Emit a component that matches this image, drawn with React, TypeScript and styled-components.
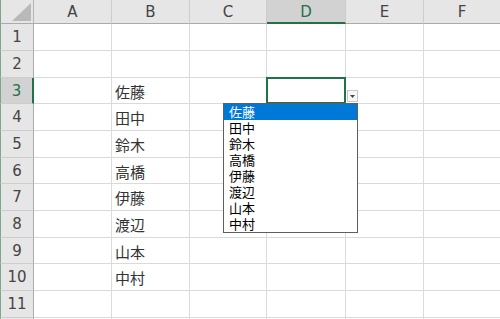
import styled, { createGlobalStyle, css } from "styled-components";

const GlobalStyle = createGlobalStyle`
  html, body {
    margin: 0;
    padding: 0;
    background: #ffffff;
    overflow: hidden;
  }
`;

const COLS = ["A", "B", "C", "D", "E", "F"];
const COL_WIDTHS = [78, 78, 77, 79, 78, 77];
// 11 visible rows; the 12th only peeks out under the window edge
const ROW_HEIGHTS = [27, 27, 26, 27, 27, 26, 27, 27, 26, 27, 27, 27];
const NAMES = ["佐藤", "田中", "鈴木", "高橋", "伊藤", "渡辺", "山本", "中村"];

// the list lives in B3:B10, the validated cell is D3
const cellValue = (row: number, col: number) =>
  col === 1 && row >= 3 && row <= 10 ? NAMES[row - 3] : "";

const Sheet = styled.div`
  width: 500px;
  height: 319px;
  overflow: hidden;
  display: grid;
  grid-template-columns: 34px ${COL_WIDTHS.map((w) => `${w}px`).join(" ")};
  grid-template-rows: 24px ${ROW_HEIGHTS.map((h) => `${h}px`).join(" ")};
  font-family: "DejaVu Sans", "Liberation Sans", sans-serif;
`;

const headerBase = css`
  box-sizing: border-box;
  background: #e6e6e6;
  display: flex;
  align-items: center;
  justify-content: center;
  font-size: 15px;
  color: #444444;
`;

const Corner = styled.div`
  ${headerBase};
  border-left: 1px solid #7ca68b;
  border-right: 1px solid #b5b5b5;
  border-bottom: 1px solid #ababab;
  justify-content: flex-end;
  align-items: flex-end;
  padding: 0 2px 2px 0;
`;

const ColHeader = styled.div<{ $selected?: boolean }>`
  ${headerBase};
  border-right: 1px solid #cdcdcd;
  border-bottom: 1px solid #ababab;
  ${(p) =>
    p.$selected &&
    css`
      background: #d2d2d2;
      color: #217346;
      border-bottom: 2px solid #217346;
      padding-top: 1px;
    `}
`;

const RowHeader = styled.div<{ $selected?: boolean }>`
  ${headerBase};
  border-left: 1px solid #7ca68b;
  border-right: 1px solid #ababab;
  border-bottom: 1px solid #cdcdcd;
  ${(p) =>
    p.$selected &&
    css`
      background: #d2d2d2;
      color: #217346;
      border-right: 2px solid #217346;
    `}
`;

const Cell = styled.div<{ $active?: boolean }>`
  box-sizing: border-box;
  position: relative;
  border-right: 1px solid #dadada;
  border-bottom: 1px solid #dadada;
  display: flex;
  align-items: center;
  padding: 1px 0 0 3px;
  font-family: "Noto Sans CJK JP", sans-serif;
  font-size: 15px;
  color: #333333;
  ${(p) =>
    p.$active &&
    css`
      z-index: 2;
      &::before {
        content: "";
        position: absolute;
        top: -1px;
        left: -1px;
        right: -1px;
        bottom: -1px;
        border: 2px solid #217346;
      }
    `}
`;

const DropButton = styled.div`
  position: absolute;
  left: calc(100% + 2px);
  top: 12px;
  width: 11px;
  height: 12px;
  box-sizing: border-box;
  border: 1px solid #c6c6c6;
  background: #f7f7f7;
  display: flex;
  align-items: center;
  justify-content: center;
`;

const List = styled.div`
  position: absolute;
  left: -44px;
  top: 25px;
  width: 135px;
  box-sizing: border-box;
  border: 1px solid #5f5f5f;
  background: #ffffff;
  display: flex;
  flex-direction: column;
`;

const ListItem = styled.div<{ $selected?: boolean }>`
  height: 16px;
  line-height: 16px;
  padding-left: 5px;
  font-family: "Noto Sans CJK JP", sans-serif;
  font-size: 13px;
  color: ${(p) => (p.$selected ? "#ffffff" : "#000000")};
  background: ${(p) => (p.$selected ? "#0078d7" : "transparent")};
`;

const Dropdown = () => (
  <>
    <DropButton>
      <svg width="5" height="3" viewBox="0 0 5 3">
        <path d="M0 0h5L2.5 3z" fill="#444" />
      </svg>
    </DropButton>
    <List>
      {NAMES.map((n, i) => (
        <ListItem key={n} $selected={i === 0}>
          {n}
        </ListItem>
      ))}
    </List>
  </>
);

export default function App() {
  return (
    <>
      <GlobalStyle />
      <Sheet>
        <Corner>
          <svg width="19" height="18" viewBox="0 0 19 18">
            <path d="M19 0V18H0z" fill="#b9b9b9" />
          </svg>
        </Corner>
        {COLS.map((c) => (
          <ColHeader key={c} $selected={c === "D"}>
            {c}
          </ColHeader>
        ))}
        {ROW_HEIGHTS.map((_, r) => {
          const row = r + 1;
          return [
            <RowHeader key={`h${row}`} $selected={row === 3}>
              {row <= 11 ? row : ""}
            </RowHeader>,
            ...COLS.map((c, ci) => {
              const active = row === 3 && c === "D";
              return (
                <Cell key={`${c}${row}`} $active={active}>
                  {cellValue(row, ci)}
                  {active && <Dropdown />}
                </Cell>
              );
            }),
          ];
        })}
      </Sheet>
    </>
  );
}
